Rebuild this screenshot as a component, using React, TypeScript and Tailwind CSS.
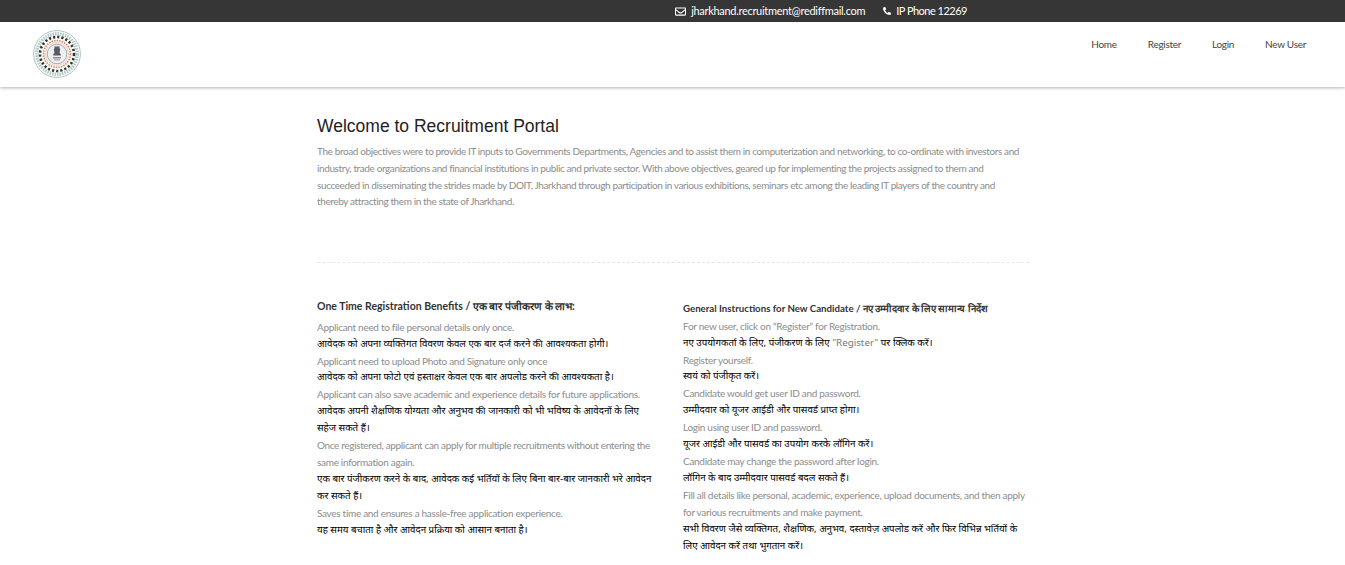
import type { ReactNode } from "react";
import { FaPhoneAlt, FaRegEnvelope } from "react-icons/fa";

const hindi = "font-['Noto_Sans',sans-serif] text-[9.75px] tracking-normal text-black";

const benefits: { id: string; en: ReactNode; hi: ReactNode }[] = [
  { id: "once", en: "Applicant need to file personal details only once.", hi: "आवेदक को अपना व्यक्तिगत विवरण केवल एक बार दर्ज करने की आवश्यकता होगी।" },
  { id: "photo", en: "Applicant need to upload Photo and Signature only once", hi: "आवेदक को अपना फोटो एवं हस्ताक्षर केवल एक बार अपलोड करने की आवश्यकता है।" },
  { id: "save", en: "Applicant can also save academic and experience details for future applications.", hi: "आवेदक अपनी शैक्षणिक योग्यता और अनुभव की जानकारी को भी भविष्य के आवेदनों के लिए सहेज सकते हैं।" },
  {
    id: "multi",
    en: (
      <>
        <span className="tracking-[-0.35px]">Once registered, applicant can apply for multiple recruitments without entering the</span> same information again.
      </>
    ),
    hi: "एक बार पंजीकरण करने के बाद, आवेदक कई भर्तियों के लिए बिना बार-बार जानकारी भरे आवेदन कर सकते हैं।",
  },
  { id: "time", en: "Saves time and ensures a hassle-free application experience.", hi: "यह समय बचाता है और आवेदन प्रक्रिया को आसान बनाता है।" },
];

const instructions: { id: string; en: ReactNode; hi: ReactNode }[] = [
  { id: "new", en: "For new user, click on “Register” for Registration.", hi: <>नए उपयोगकर्ता के लिए, पंजीकरण के लिए <span className="text-[#777]">"Register"</span> पर क्लिक करें।</> },
  { id: "reg", en: "Register yourself.", hi: "स्वयं को पंजीकृत करें।" },
  { id: "id", en: "Candidate would get user ID and password.", hi: "उम्मीदवार को यूजर आईडी और पासवर्ड प्राप्त होगा।" },
  { id: "login", en: "Login using user ID and password.", hi: "यूजर आईडी और पासवर्ड का उपयोग करके लॉगिन करें।" },
  { id: "pass", en: "Candidate may change the password after login.", hi: "लॉगिन के बाद उम्मीदवार पासवर्ड बदल सकते हैं।" },
  { id: "fill", en: "Fill all details like personal, academic, experience, upload documents, and then apply for various recruitments and make payment.", hi: "सभी विवरण जैसे व्यक्तिगत, शैक्षणिक, अनुभव, दस्तावेज़ अपलोड करें और फिर विभिन्न भर्तियों के लिए आवेदन करें तथा भुगतान करें।" },
];

function Emblem() {
  return (
    <svg width="48" height="48" viewBox="0 0 48 48" aria-label="Jharkhand emblem">
      <circle cx="24" cy="24" r="23.4" fill="#fff" stroke="#a9c4bb" strokeWidth="1" />
      <circle cx="24" cy="24" r="20.2" fill="none" stroke="#b9c8c4" strokeWidth="3.4" strokeDasharray="1.6 0.9" />
      <circle cx="24" cy="24" r="17" fill="none" stroke="#26382f" strokeWidth="2.6" strokeDasharray="2.2 2" />
      <circle cx="24" cy="24" r="15.2" fill="#f6f1ec" />
      <circle cx="24" cy="24" r="13.4" fill="none" stroke="#d9764a" strokeWidth="1.4" strokeDasharray="1.3 1.3" />
      <circle cx="24" cy="24" r="11.4" fill="none" stroke="#c9c1b8" strokeWidth="1" strokeDasharray="1 1" />
      <circle cx="24" cy="24" r="9.8" fill="#efeff0" stroke="#8f8f96" strokeWidth="0.7" />
      <path d="M21.2 16.4h5.6l-.5 1.6.9 1.1-.7 4 1.2 1v1.4h-7.4v-1.4l1.2-1-.7-4 .9-1.1z" fill="#5a5a60" />
      <rect x="20" y="27.2" width="8" height="1.2" fill="#77777d" />
      <rect x="21" y="29.4" width="6" height="1" fill="#9a9aa0" />
    </svg>
  );
}

function Notes({ items }: { items: { id: string; en: ReactNode; hi: ReactNode }[] }) {
  return (
    <div className="leading-[16.9px] tracking-[-0.3px]">
      {items.map((item) => (
        <div key={item.id}>
          <p className="text-[#8c8c8c]">{item.en}</p>
          <p className={hindi}>{item.hi}</p>
        </div>
      ))}
    </div>
  );
}

export default function App() {
  return (
    <div className="h-[565px] overflow-hidden bg-white font-['Lato','Liberation_Sans',sans-serif]">
      <div className="flex h-[22px] items-center justify-end bg-[#363636] pr-[378px] text-[11px] tracking-[-0.3px] text-white">
        <FaRegEnvelope className="mr-[5px] h-[11px] w-[11px]" />
        <span>jharkhand.recruitment@rediffmail.com</span>
        <FaPhoneAlt className="ml-[18px] mr-[5px] h-[8px] w-[8px]" />
        <span className="tracking-[-0.5px]">IP Phone 12269</span>
      </div>

      <header className="flex h-[65px] items-start justify-between pl-[33px] pr-[39px] shadow-[0_1px_3px_rgba(0,0,0,0.3)]">
        <div className="pt-[8px]">
          <Emblem />
        </div>
        <nav className="flex gap-[31px] pt-[15px] text-[10px] leading-[14px] tracking-[-0.3px] text-[#444]">
          <a>Home</a>
          <a>Register</a>
          <a>Login</a>
          <a>New User</a>
        </nav>
      </header>

      <main className="mx-auto w-[712px] translate-x-[0.5px] pt-[27px] text-[10px] leading-[16.75px]">
        <h1 className="font-['Liberation_Sans',sans-serif] text-[17.5px] leading-[24px] text-[#222]">Welcome to Recruitment Portal</h1>
        <p className="mt-[5px] pr-[8px] tracking-[-0.39px] text-[#8c8c8c]">
          The broad objectives were to provide IT inputs to Governments Departments, Agencies and to assist them in computerization and networking, to co-ordinate with investors and industry, trade organizations and financial institutions in public and private sector. With above objectives, geared up for implementing the projects assigned to them and succeeded in disseminating the strides made by DOIT, Jharkhand through participation in various exhibitions, seminars etc among the leading IT players of the country and thereby attracting them in the state of Jharkhand.
        </p>
        <div className="mt-[52px] border-t border-dashed border-[#e6e6e6]" />

        <div className="mt-[35px] flex gap-[25px]">
          <section className="w-[341px]">
            <h2 className="mb-[4px] text-[10.5px] font-bold text-[#333]">One Time Registration Benefits / एक बार पंजीकरण के लाभ:</h2>
            <Notes items={benefits} />
          </section>
          <section className="w-[346px] pt-[2px]">
            <h2 className="mb-[1px] text-[9.7px] font-bold text-[#333]">General Instructions for New Candidate / नए उम्मीदवार के लिए सामान्य निर्देश</h2>
            <Notes items={instructions} />
          </section>
        </div>
      </main>
    </div>
  );
}
